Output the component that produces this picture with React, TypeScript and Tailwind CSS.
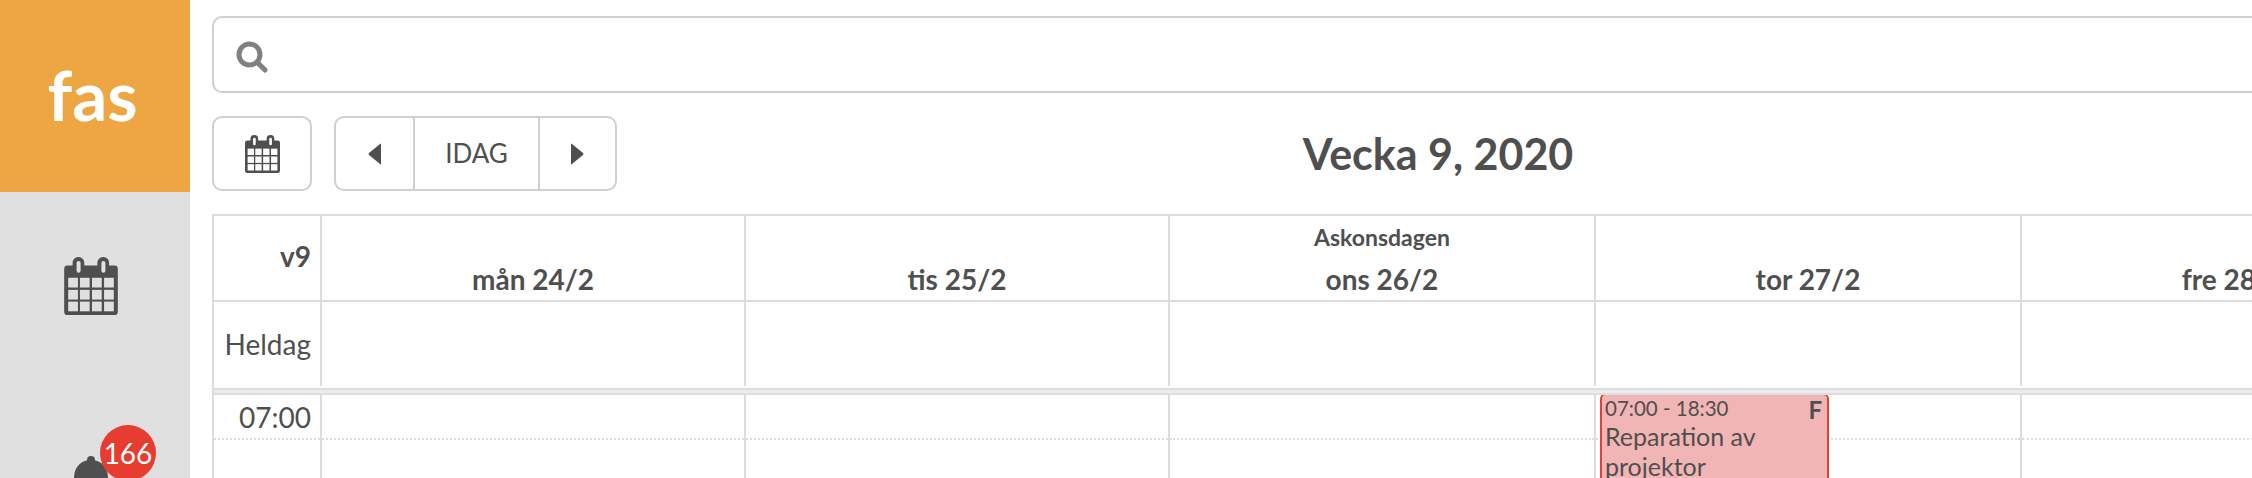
const days = [
  { label: "mån 24/2", width: "w-[424px]" },
  { label: "tis 25/2", width: "w-[424px]" },
  { label: "ons 26/2", width: "w-[426px]", note: "Askonsdagen" },
  { label: "tor 27/2", width: "w-[426px]", event: true },
  { label: "fre 28/2", width: "w-[425px]" },
  { label: "lör 29/2", width: "w-[425px]" },
];

function CalendarIcon({ cell, className }: { cell: string; className: string }) {
  const cols = [12, 47, 83, 119];
  const rows = [62, 98, 133];
  return (
    <svg viewBox="0 0 160 173" className={className}>
      <rect x="0" y="25" width="160" height="148" rx="10" fill="#4f4f4f" />
      <rect x="25" y="0" width="35" height="60" rx="17" fill="#4f4f4f" />
      <rect x="99" y="0" width="35" height="60" rx="17" fill="#4f4f4f" />
      <rect x="37" y="12" width="12" height="35" rx="6" fill={cell} />
      <rect x="111" y="12" width="12" height="35" rx="6" fill={cell} />
      {rows.map((y) =>
        cols.map((x) => <rect key={`${x}-${y}`} x={x} y={y} width="29" height="29" fill={cell} />)
      )}
    </svg>
  );
}

function Sidebar() {
  return (
    <div className="w-[190px] shrink-0 h-full bg-[#e0e0e0] flex flex-col items-center overflow-hidden">
      <div className="w-full h-[192px] shrink-0 bg-[#eea642] flex items-center justify-center text-white text-[69px] font-bold leading-none pb-[4px] pr-[5px]">
        fas
      </div>
      <div className="pt-[65px] shrink-0 -ml-[8px]">
        <CalendarIcon cell="#e0e0e0" className="w-[54px] h-[58px]" />
      </div>
      <div className="relative mt-[141px] shrink-0 w-[34px] h-[40px] -ml-[8px]">
        <svg viewBox="0 0 34 40" className="w-[34px] h-[40px]">
          <circle cx="17" cy="4" r="4" fill="#4f4f4f" />
          <path d="M0 40V22C0 11 7 4 17 4s17 7 17 18v18z" fill="#4f4f4f" />
        </svg>
        <div className="absolute left-[26px] top-[-31px] w-[56px] h-[56px] rounded-full bg-[#e73c30] text-white text-[28px] leading-[56px] text-center">
          166
        </div>
      </div>
    </div>
  );
}

function Toolbar() {
  return (
    <div className="grid grid-cols-[1fr_auto_1fr] items-center mt-[23px]">
      <div className="flex gap-[22px]">
        <button className="w-[100px] h-[75px] rounded-[10px] border-2 border-[#cfcfcf] flex items-center justify-center">
          <CalendarIcon cell="#ffffff" className="w-[35px] h-[38px]" />
        </button>
        <div className="flex h-[75px] rounded-[10px] border-2 border-[#cfcfcf]">
          <button className="w-[77px] flex items-center justify-center">
            <svg viewBox="0 0 13 22" className="w-[13px] h-[22px]">
              <path d="M13 1v20q0 1-1 0L1 12q-1-1 0-2L12 1q1-1 1 0z" fill="#4f4f4f" />
            </svg>
          </button>
          <button className="w-[127px] border-x-2 border-[#cfcfcf] text-[26px] text-[#4f4f4f]">IDAG</button>
          <button className="w-[75px] flex items-center justify-center">
            <svg viewBox="0 0 13 22" className="w-[13px] h-[22px]">
              <path d="M0 1v20q0 1 1 0l11-9q1-1 0-2L1 1Q0 0 0 1z" fill="#4f4f4f" />
            </svg>
          </button>
        </div>
      </div>
      <h1 className="text-[43px] font-bold text-[#4f4f4f] leading-none">Vecka 9, 2020</h1>
      <div />
    </div>
  );
}

function Calendar() {
  return (
    <div className="mt-[23px] border-t-2 border-l-2 border-[#dddddd] text-[#4f4f4f]">
      {/* header */}
      <div className="flex h-[84px] border-b-2 border-[#dddddd] box-content">
        <div className="w-[106px] shrink-0 text-right pr-[9px] pt-[24px] text-[28px] font-bold leading-[32px]">v9</div>
        {days.map((d) => (
          <div key={d.label} className={`${d.width} shrink-0 border-l-2 border-[#dddddd] flex flex-col justify-end items-center pb-[5px]`}>
            {d.note && <div className="text-[23px] font-bold leading-[28px] mb-[12px]">{d.note}</div>}
            <div className="text-[28px] font-bold leading-[32px]">{d.label}</div>
          </div>
        ))}
      </div>
      {/* all day */}
      <div className="flex h-[84px]">
        <div className="w-[106px] shrink-0 text-right pr-[9px] pt-[26px] text-[28px] leading-[32px]">Heldag</div>
        {days.map((d) => (
          <div key={d.label} className={`${d.width} shrink-0 border-l-2 border-[#dddddd]`} />
        ))}
      </div>
      <div className="relative z-10 h-[3px] mt-[2px] bg-[#ececec] border-y-2 border-[#dddddd] box-content" />
      {/* hours */}
      <div className="flex h-[83px]">
        <div className="w-[106px] shrink-0 text-right pr-[9px] pt-[6px] text-[28px] leading-[32px]">
          07:00
          <div className="h-0 mt-[5px] -mr-[9px] border-b-2 border-dotted border-[#dddddd]" />
        </div>
        {days.map((d) => (
          <div key={d.label} className={`relative ${d.width} shrink-0 border-l-2 border-[#dddddd]`}>
            <div className="h-[43px] border-b-2 border-dotted border-[#dddddd] box-content" />
            {d.event && (
              <div className="absolute left-[4px] top-[-2px] w-[229px] h-[85px] bg-[#f2b5b5] border-2 border-b-0 border-[#e0403a] rounded-t-[6px] shadow-[0_0_0_2px_#ffffff] px-[3px] pt-[1px]">
                <div className="flex justify-between">
                  <span className="text-[20.5px] leading-[24px]">07:00 - 18:30</span>
                  <span className="text-[24px] font-bold leading-[28px] pr-[2px]">F</span>
                </div>
                <div className="text-[25px] leading-[30px] mt-[-3px] w-[200px]">Reparation av projektor</div>
              </div>
            )}
          </div>
        ))}
      </div>
    </div>
  );
}

export default function App() {
  return (
    <div className="flex h-[478px] w-[2252px] overflow-hidden bg-white font-['Lato',sans-serif]">
      <Sidebar />
      <div className="w-[2452px] shrink-0 ml-[22px] pt-[16px]">
        <div className="h-[77px] border-2 border-[#cfcfcf] rounded-[10px] flex items-center pl-[22px] pt-[5px]">
          <svg viewBox="0 0 32 32" className="w-[32px] h-[32px]" fill="none" stroke="#808080">
            <circle cx="13.5" cy="13.5" r="10.5" strokeWidth="5" />
            <path d="M21 21l8 8" strokeWidth="5" strokeLinecap="round" />
          </svg>
        </div>
        <Toolbar />
        <Calendar />
      </div>
    </div>
  );
}
